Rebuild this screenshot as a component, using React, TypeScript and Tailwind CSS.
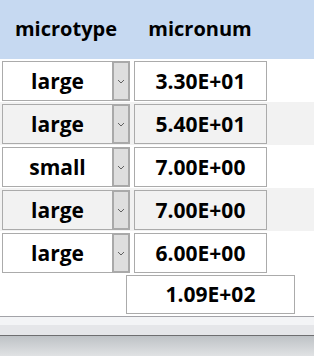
import React from "react";

interface Row {
  type: string;
  num: string;
}

const rows: Row[] = [
  { type: "large", num: "3.30E+01" },
  { type: "large", num: "5.40E+01" },
  { type: "small", num: "7.00E+00" },
  { type: "large", num: "7.00E+00" },
  { type: "large", num: "6.00E+00" },
];

function Chevron() {
  return (
    <svg width="8" height="5" viewBox="0 0 8 5" fill="none">
      <path d="M1 1 L4 4 L7 1" stroke="#606060" strokeWidth="1" />
    </svg>
  );
}

export default function App() {
  return (
    <div
      className="flex h-[356px] w-[314px] flex-col bg-white text-[20px] font-bold text-black"
      style={{ fontFamily: '"Open Sans", "Noto Sans", sans-serif' }}
    >
      <div className="flex h-[59px] shrink-0 items-center bg-[#c6d9f1] pb-[2px]">
        <div className="w-[132px] text-center">microtype</div>
        <div className="w-[136px] text-center">micronum</div>
      </div>

      {rows.map((row, index) => {
        const shaded = index % 2 === 1;
        return (
          <div
            key={index}
            className={
              "flex h-[43px] shrink-0 gap-[4px] pl-[2px] pt-[2px] text-[21px] " +
              (shaded ? "bg-[#f2f2f2]" : "bg-white")
            }
          >
            <div className="flex h-[40px] w-[128px] border border-[#ababab]">
              <div className="flex flex-1 items-center justify-center leading-none">
                {row.type}
              </div>
              <div className="-my-px -mr-px flex h-[40px] w-[18px] items-center justify-center border-2 border-[#a9a9a9] bg-[#dedede]">
                <Chevron />
              </div>
            </div>
            <div className="flex h-[40px] w-[133px] items-center justify-center border border-[#ababab] leading-none">
              {row.num}
            </div>
          </div>
        );
      })}

      <div className="flex h-[42px] shrink-0 pl-[126px] pt-[1px] text-[21px]">
        <div className="flex h-[39px] w-[169px] items-center justify-center border border-[#ababab] leading-none">
          1.09E+02
        </div>
      </div>

      <div className="h-[19px] shrink-0 border-t border-[#a3a3a8]">
        <div className="h-[8px] bg-[#f3f4f6]" />
        <div className="h-[10px] bg-[#e5e6e9]" />
      </div>
      <div className="flex-1 border-t border-[#6e6e70] bg-gradient-to-b from-[#bec2c6] to-[#e0e2e4]" />
    </div>
  );
}
